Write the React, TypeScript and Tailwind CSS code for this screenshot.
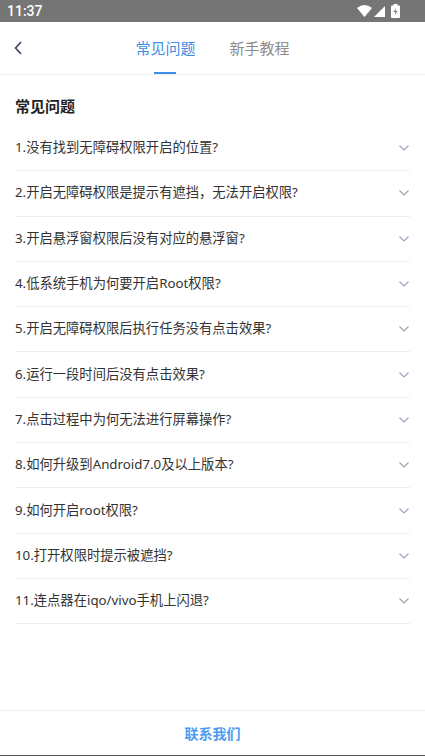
import React from "react";

const questions = [
  "1.没有找到无障碍权限开启的位置?",
  "2.开启无障碍权限是提示有遮挡，无法开启权限?",
  "3.开启悬浮窗权限后没有对应的悬浮窗?",
  "4.低系统手机为何要开启Root权限?",
  "5.开启无障碍权限后执行任务没有点击效果?",
  "6.运行一段时间后没有点击效果?",
  "7.点击过程中为何无法进行屏幕操作?",
  "8.如何升级到Android7.0及以上版本?",
  "9.如何开启root权限?",
  "10.打开权限时提示被遮挡?",
  "11.连点器在iqo/vivo手机上闪退?",
];

function StatusBar() {
  return (
    <div className="flex h-[22px] items-center justify-between bg-[#757575] px-[7px] text-white">
      <span className="text-[14px] font-medium" style={{ fontFamily: "Roboto, sans-serif" }}>
        11:37
      </span>
      <div className="flex items-center gap-[2px] pr-[18px]">
        <svg width="15" height="12" viewBox="0 0 15 12">
          <path d="M0 3 Q7.5 -3 15 3 L7.5 12 Z" fill="white" />
        </svg>
        <svg width="11" height="11" viewBox="0 0 11 11">
          <path d="M11 0 L11 11 L0 11 Z" fill="white" />
        </svg>
        <svg width="9" height="14" viewBox="0 0 9 14" className="ml-[4px]">
          <rect x="2.5" y="0" width="4" height="2" fill="white" />
          <rect x="0" y="1.5" width="9" height="12.5" rx="1" fill="white" />
          <path d="M5 4 L2.5 8 L4.5 8 L4 11 L6.5 7 L4.5 7 Z" fill="#757575" />
        </svg>
      </div>
    </div>
  );
}

function Header() {
  return (
    <div className="relative flex h-[53px] items-center justify-center border-b border-[#eeeeee]">
      <div className="absolute left-[12px] top-[17px]">
        <svg width="14" height="18" viewBox="0 0 14 18">
          <path d="M9 3 L3.5 9 L9 15" fill="none" stroke="#34405a" strokeWidth="1.6" />
        </svg>
      </div>
      <div className="flex h-full items-center gap-[34px]">
        <div className="relative flex h-full items-center">
          <span className="text-[15px] text-[#3d8fe6]">常见问题</span>
          <div className="absolute bottom-0 left-1/2 h-[2px] w-[22px] -translate-x-1/2 bg-[#3d8fe6]" />
        </div>
        <span className="text-[15px] text-[#8c8c8c]">新手教程</span>
      </div>
    </div>
  );
}

function Chevron() {
  return (
    <svg width="12" height="8" viewBox="0 0 12 8">
      <path d="M1.5 1.5 L6 6 L10.5 1.5" fill="none" stroke="#9aa5b8" strokeWidth="1.2" />
    </svg>
  );
}

export default function App() {
  return (
    <div
      className="flex h-[756px] w-[425px] flex-col bg-white"
      style={{ fontFamily: '"Noto Sans", "Noto Sans CJK SC", sans-serif' }}
    >
      <StatusBar />
      <Header />
      <div className="flex-1 px-[15px]">
        <h2 className="pt-[20px] pb-[9px] text-[15px] font-bold leading-[22px] text-[#222222]">常见问题</h2>
        {questions.map((q) => (
          <div key={q} className="flex h-[45.3px] items-center justify-between border-b border-[#eeeeee]">
            <span className="text-[13.3px] text-[#333333]">{q}</span>
            <Chevron />
          </div>
        ))}
      </div>
      <div className="flex h-[45px] items-center justify-center border-t border-[#eeeeee]">
        <span className="text-[14px] font-bold text-[#4a9bf0]">联系我们</span>
      </div>
      <div className="h-[1px] bg-[#555555]" />
    </div>
  );
}
